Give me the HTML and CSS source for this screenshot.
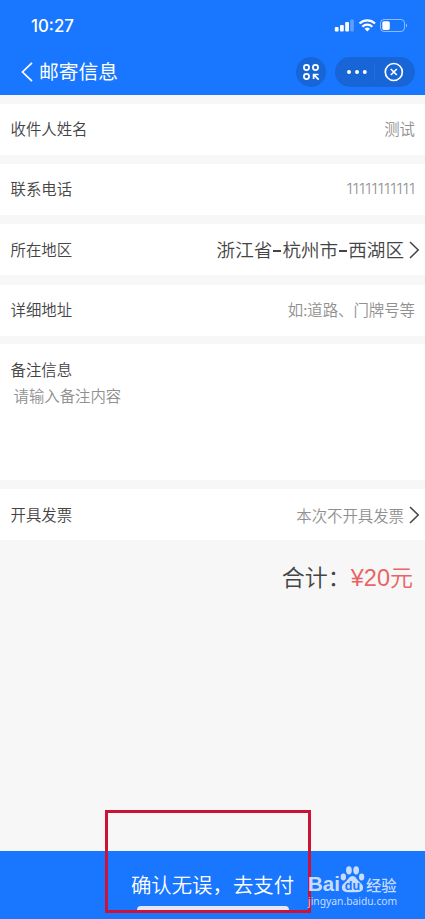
FILE: index.html
```html
<!DOCTYPE html>
<html lang="zh-CN">
<head>
<meta charset="utf-8">
<title>邮寄信息</title>
<link rel="stylesheet" href="styles.css">
</head>
<body>
<div class="app">
  <header class="header">
    <div class="status">
      <span class="time">10:27</span>
      <svg class="status-icons" width="76" height="16" viewBox="0 0 76 16">
        <g fill="#fff">
          <rect x="1.800" y="9" width="3.800" height="4.500" rx="1"/>
          <rect x="7" y="7" width="3.800" height="6.500" rx="1"/>
          <rect x="12.200" y="4" width="3.800" height="9.500" rx="1"/>
          <rect x="17.200" y="1.500" width="3.600" height="12" rx="1" opacity=".3"/>
          <path d="M34.300 13.500 31.600 10.700a3.900 3.900 0 0 1 5.400 0z"/>
        </g>
        <g fill="none" stroke="#fff" stroke-width="2.200">
          <path d="M26.600 5.500a11 11 0 0 1 15.400 0"/>
          <path d="M29.300 8.700a7.200 7.200 0 0 1 10 0"/>
        </g>
        <rect x="47.500" y="1.500" width="24" height="12" rx="3.500" fill="none" stroke="#fff" stroke-opacity=".5"/>
        <rect x="49.300" y="3.300" width="7.500" height="8.600" rx="1.600" fill="#fff"/>
        <path d="M73 5.500q2.200 2 0 4z" fill="#fff" opacity=".6"/>
      </svg>
    </div>
    <div class="nav">
      <svg class="back" width="12" height="20" viewBox="0 0 12 20"><path d="M11 .8 1.500 10 11 19.200" fill="none" stroke="#fff" stroke-width="1.700"/></svg>
      <h1 class="title">邮寄信息</h1>
      <svg class="apps" width="30" height="30" viewBox="0 0 30 30">
        <circle cx="15" cy="15" r="15" fill="#1765d6"/>
        <g fill="none" stroke="#fff" stroke-width="1.700">
          <circle cx="10.500" cy="10.500" r="2.600"/><circle cx="19.500" cy="10.500" r="2.600"/><circle cx="10.500" cy="19.500" r="2.600"/>
          <path d="M17.600 22v-4.500h4.900M17.800 17.700l4.900 4.900"/>
        </g>
      </svg>
      <svg class="capsule" width="80" height="30" viewBox="0 0 80 30">
        <rect width="80" height="30" rx="15" fill="#1765d6"/>
        <g fill="#fff"><circle cx="14" cy="15" r="2"/><circle cx="22" cy="15" r="2"/><circle cx="29.800" cy="15" r="2"/></g>
        <path d="M39.500 6v18" stroke="#2070e0"/>
        <g fill="none" stroke="#fff" stroke-width="1.700"><circle cx="58.800" cy="15" r="8.500"/><path d="m55.800 12 6 6m0-6-6 6"/></g>
      </svg>
    </div>
  </header>
  <main class="form">
    <div class="row upper"><span class="label">收件人姓名</span><span class="value">测试</span></div>
    <div class="row upper"><span class="label">联系电话</span><span class="value phone">11111111111</span></div>
    <div class="row"><span class="label">所在地区</span><span class="value region">浙江省<span class="dash"></span>杭州市<span class="dash"></span>西湖区</span><svg class="chevron" width="11" height="18" viewBox="0 0 11 18"><path d="m1 1 8.200 8L1 17" fill="none" stroke="#444" stroke-width="1.500"/></svg></div>
    <div class="row upper address"><span class="label">详细地址</span><span class="value">如:道路、门牌号等</span></div>
    <div class="note"><div class="label">备注信息</div><div class="placeholder">请输入备注内容</div></div>
    <div class="row"><span class="label">开具发票</span><span class="value invoice">本次不开具发票</span><svg class="chevron" width="11" height="18" viewBox="0 0 11 18"><path d="m1 1 8.200 8L1 17" fill="none" stroke="#444" stroke-width="1.500"/></svg></div>
    <div class="total"><span>合计：</span><span class="price"><span class="amount">¥20</span>元</span></div>
  </main>
  <footer class="pay">
    <span class="pay-text">确认无误，去支付</span>
    <div class="home-bar"></div>
  </footer>
  <div class="highlight"></div>
  <div class="watermark">
    <div class="brand"><span class="bai">Bai</span>
      <svg class="paw" width="25" height="28" viewBox="0 0 26 28">
        <g fill="currentColor"><ellipse cx="3.500" cy="12" rx="2.800" ry="3.600"/><ellipse cx="9.300" cy="5" rx="3" ry="4.300"/><ellipse cx="16.800" cy="5" rx="3" ry="4.300"/><ellipse cx="22.500" cy="12" rx="2.800" ry="3.600"/><path d="M13 11c-3 0-4.300 3.300-6.500 5.300C3.800 18.700 1.500 20.500 2 23.500c.6 3.700 4 4.300 11 4.300s10.400-.6 11-4.300c.5-3-1.800-4.800-4.500-7.200C17.300 14.300 16 11 13 11z"/></g>
        <text x="13" y="25" text-anchor="middle" class="du">du</text>
      </svg>
      <span class="jingyan">经验</span></div>
    <div class="site">jingyan.baidu.com</div>
  </div>
</div>
</body>
</html>
```
FILE: styles.css
```css
* { box-sizing: border-box; }
body { margin: 0; background: #f7f7f7; font-family: "Noto Sans CJK SC", sans-serif; font-weight: 350; color: #444; }
.app { position: relative; width: 425px; height: 919px; display: flex; flex-direction: column; overflow: hidden; }
.header { height: 95px; flex: none; background: #1876ff; color: #fff; }
.status { height: 50px; display: flex; justify-content: space-between; align-items: center; padding: 1px 16px 0 31px; }
.time { font: 500 16.8px/20px Inter, sans-serif; }
.nav { height: 44px; display: flex; align-items: center; padding: 0 10px 0 21px; }
.title { margin: -2px auto 0 6px; font-size: 19.8px; line-height: 28px; font-weight: 400; }
.capsule { margin-left: 9px; }
.form { flex: 1; display: flex; flex-direction: column; gap: 9px; padding-top: 9px; }
.row { height: 51px; flex: none; display: flex; align-items: center; background: #fff; padding: 0 10px 2px 10.5px; }
.upper { padding-bottom: 3px; }
.address { margin-top: 1px; }
.label { font-size: 15.4px; line-height: 22px; }
.value { margin-left: auto; font-size: 15.4px; line-height: 22px; color: #909090; }
.phone { font-family: Inter, sans-serif; font-size: 15px; letter-spacing: .35px; margin-right: -.35px; padding-top: 1px; }
.region { font-size: 18.6px; color: #444; }
.dash { display: inline-block; width: 8px; height: 1.5px; margin: 0 1px; vertical-align: 5px; background: #444; }
.chevron { margin: 2px -5px 0 5px; }
.invoice { margin-top: 2px; }
.note { height: 136px; flex: none; background: #fff; padding: 14px 10.5px; margin-top: -1px; }
.placeholder { margin: 4px 0 0 3px; font-size: 15.4px; line-height: 22px; color: #909090; }
.total { display: flex; justify-content: flex-end; padding: 10px 12px 0; font-size: 23px; line-height: 34px; }
.price { color: #e96464; }
.amount { font-family: "Liberation Sans", sans-serif; font-weight: 400; font-size: 23.5px; }
.pay { height: 68px; flex: none; background: #1876ff; color: #fff; display: flex; flex-direction: column; align-items: center; padding-top: 18px; }
.pay-text { font-size: 20.4px; line-height: 30px; }
.home-bar { width: 152px; height: 5px; margin-top: 7px; border-radius: 4px 4px 0 0; background: #e5e7f2; }
.highlight { position: absolute; left: 105px; top: 810px; width: 206px; height: 103px; border: 3px solid #cc1236; }
.watermark { position: absolute; left: 308px; top: 865px; color: #c8dcff; }
.brand { display: flex; height: 28px; align-items: flex-end; }
.bai { font: 700 20.5px/18px "Liberation Sans", sans-serif; }
.du { font: 700 13px "Liberation Sans", sans-serif; fill: #1876ff; }
.jingyan { font-size: 15.3px; line-height: 17px; font-weight: 500; margin-left: 1px; }
.site { font: 400 10.3px/14px "Noto Sans", sans-serif; margin-top: 1px; }
```
